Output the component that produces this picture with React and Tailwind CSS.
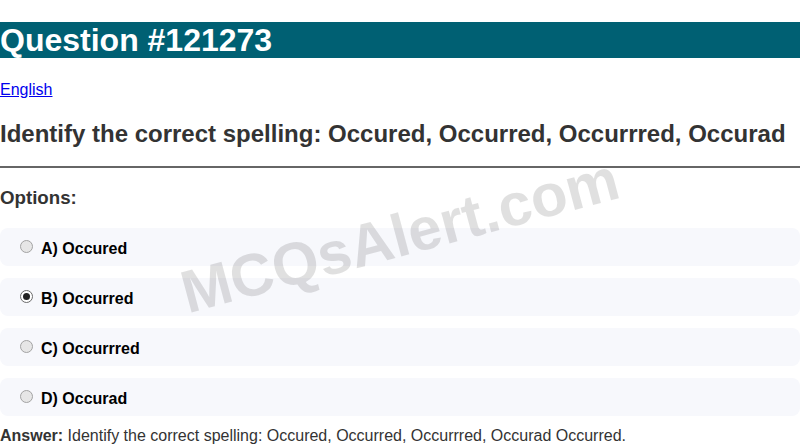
import React from "react";

const options = [
  { label: "A) Occured", checked: false },
  { label: "B) Occurred", checked: true },
  { label: "C) Occurrred", checked: false },
  { label: "D) Occurad", checked: false },
];

function Radio({ checked }) {
  if (checked) {
    return (
      <span className="flex h-[13px] w-[13px] shrink-0 items-center justify-center rounded-full border border-[#6b6b6b] bg-white">
        <span className="h-[7px] w-[7px] rounded-full bg-[#222]" />
      </span>
    );
  }
  return (
    <span className="h-[13px] w-[13px] shrink-0 rounded-full border border-[#a3a3a3] bg-[#e6e6e6]" />
  );
}

export default function App() {
  return (
    <div
      className="relative h-[446px] w-[800px] overflow-hidden bg-white text-[#333]"
      style={{ fontFamily: '"Liberation Sans", Arial, sans-serif' }}
    >
      <div className="pt-[22px]">
        <h1 className="h-[36px] bg-[#006073] text-[32px] font-bold leading-[36px] text-white">
          Question #121273
        </h1>
        <div className="mt-[23px] text-[16px] leading-[18px]">
          <a href="#" className="text-[#0000ee] underline">
            English
          </a>
        </div>
        <h2 className="mt-[21px] text-[24px] font-bold leading-[28px] text-[#333]">
          Identify the correct spelling: Occured, Occurred, Occurrred, Occurad
        </h2>
        <div className="mt-[18px] h-[2px] bg-[#666]" />
        <h3 className="mt-[19px] text-[18.7px] font-bold leading-[22px] text-[#333]">
          Options:
        </h3>
        <div className="mt-[19px] flex flex-col gap-[12px]">
          {options.map((o) => (
            <div
              key={o.label}
              className="flex h-[38px] items-start gap-[8px] rounded-[8px] bg-[#f7f8fc] pl-[20px] pt-[12px]"
            >
              <Radio checked={o.checked} />
              <span className="text-[16px] font-bold leading-[18px] text-black">
                {o.label}
              </span>
            </div>
          ))}
        </div>
        <p className="mt-[11px] text-[16px] leading-[18px] text-[#333]">
          <span className="font-bold">Answer:</span> Identify the correct
          spelling: Occured, Occurred, Occurrred, Occurad Occurred.
        </p>
      </div>
      <div className="pointer-events-none absolute inset-0 flex items-center justify-center">
        <span className="mt-[26px] -rotate-[15deg] text-[60px] font-bold leading-none text-[rgba(0,0,0,0.12)]">
          MCQsAlert.com
        </span>
      </div>
    </div>
  );
}
